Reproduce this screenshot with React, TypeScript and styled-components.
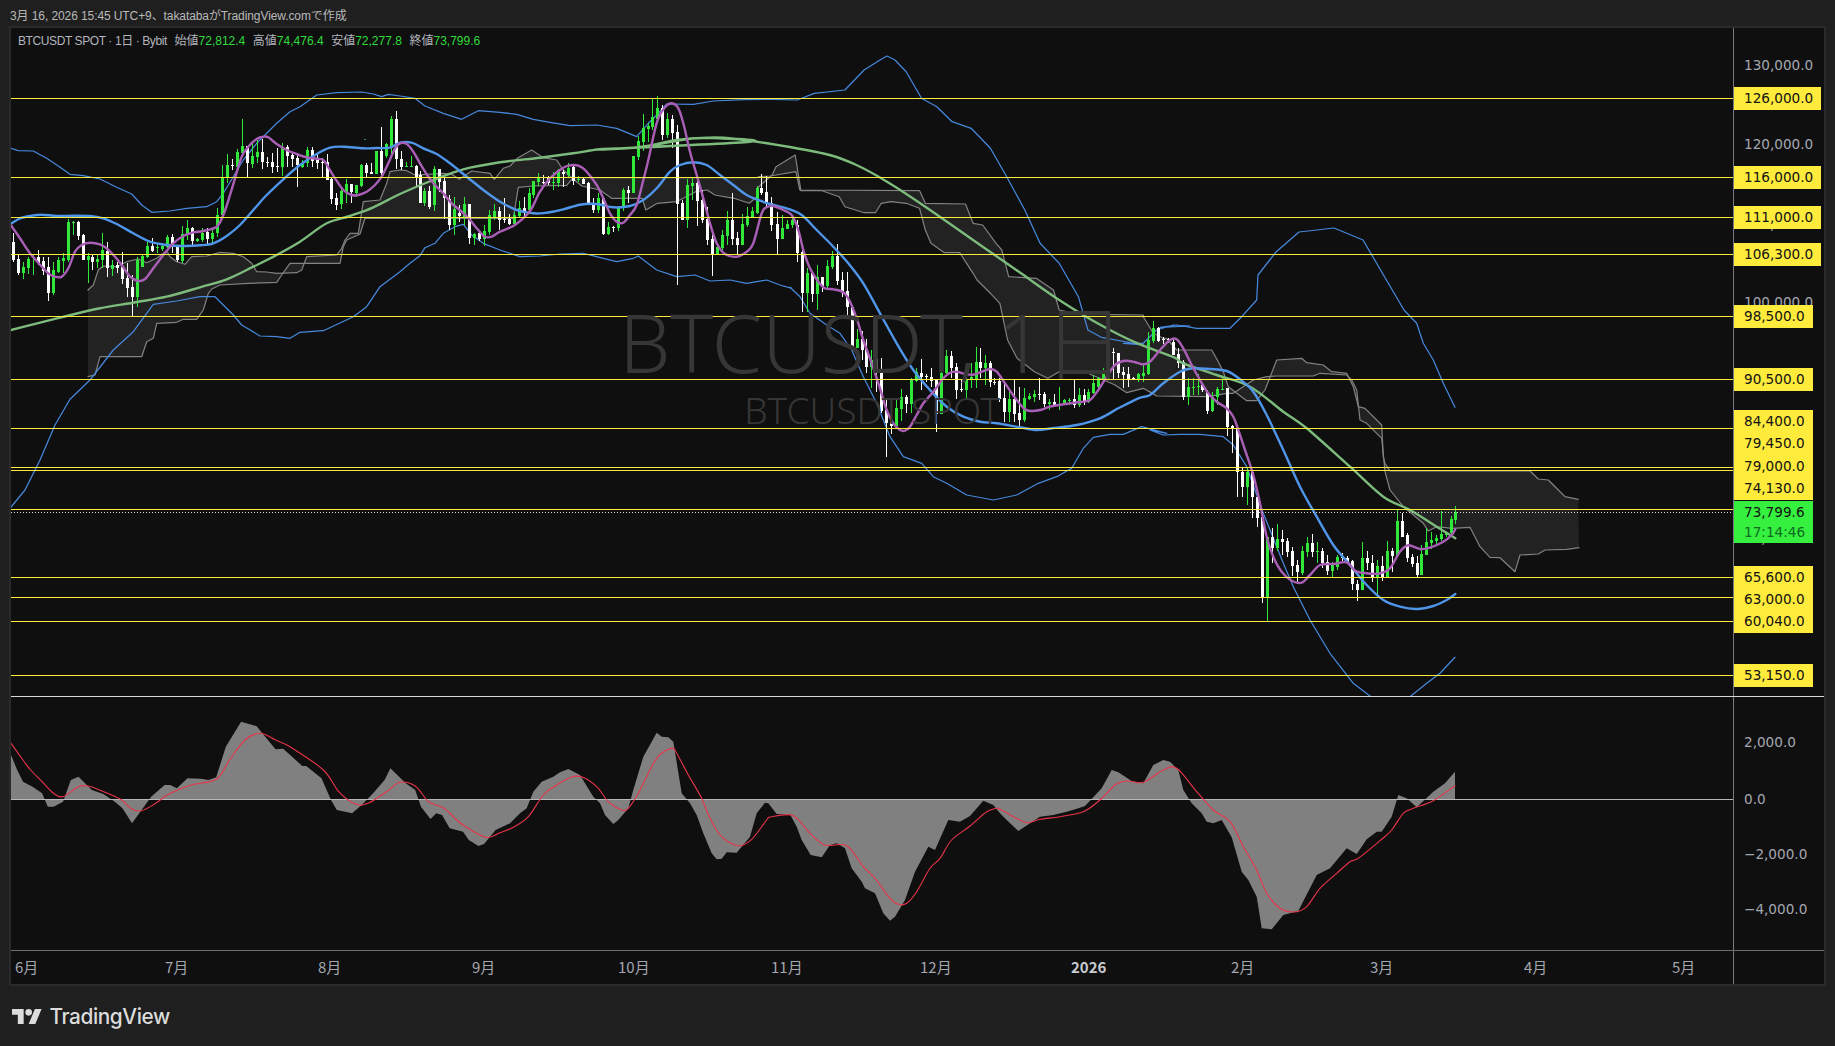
import * as React from 'react';
import styled, { createGlobalStyle } from 'styled-components';

type Pt = [number, number];

// traced from the picture: each block of numbers was read at its own crop
const at = (ox: number, oy: number, sx: number, sy: number) => (flat: number[]): Pt[] => {
  const out: Pt[] = [];
  for (let i = 0; i < flat.length; i += 2) {
    out.push([ox + flat[i] / sx, oy + flat[i + 1] / sy]);
  }
  return out;
};
const a0 = at(0, 0, 1, 1);
const a7 = at(0, 80, 3, 3);
const a9 = at(400, 80, 3, 3);
const a10 = at(790, 200, 3, 3);
const a6 = at(1150, 300, 3, 3);
const a5 = at(600, 60, 2.613, 3);
const a4 = at(0, 690, 2.613, 3);
const a11 = at(500, 700, 3, 3);
const a12 = at(1000, 700, 3, 3);

const polyline = (pts: Pt[]) => 'M' + pts.map(p => `${p[0].toFixed(1)} ${p[1].toFixed(1)}`).join('L');

const smooth = (pts: Pt[]) => {
  let d = `M${pts[0][0].toFixed(1)} ${pts[0][1].toFixed(1)}`;
  for (let i = 0; i < pts.length - 1; i++) {
    const p0 = pts[Math.max(i - 1, 0)];
    const p1 = pts[i];
    const p2 = pts[i + 1];
    const p3 = pts[Math.min(i + 2, pts.length - 1)];
    const c1x = p1[0] + (p2[0] - p0[0]) / 6;
    const c1y = p1[1] + (p2[1] - p0[1]) / 6;
    const c2x = p2[0] - (p3[0] - p1[0]) / 6;
    const c2y = p2[1] - (p3[1] - p1[1]) / 6;
    d += `C${c1x.toFixed(1)} ${c1y.toFixed(1)} ${c2x.toFixed(1)} ${c2y.toFixed(1)} ${p2[0].toFixed(1)} ${p2[1].toFixed(1)}`;
  }
  return d;
};

const purple: Pt[] = [
  ...a7([32,435,60,475,90,520,115,548,145,580,165,590,185,590,205,565,225,515,245,495,270,488,300,493,320,505,345,530,365,555,390,590,415,603,435,597,460,565,490,525,520,490,550,468,580,457,610,453,650,440,670,405,690,345,705,295,725,230,745,200,770,177,790,170,805,172,830,192,860,210,890,222,920,232,950,236,970,240,985,262,1005,295,1030,330,1055,345,1075,345,1100,335,1125,315,1145,290,1165,250,1185,205,1200,190]),
  ...a9([20,192,40,215,60,250,85,290,105,315,130,340,155,370,185,395,210,420,235,450,255,470,275,470,300,455,340,438,375,410,395,385,420,335,450,295,480,270,505,257,535,257,560,275,590,315,610,355,630,400,650,425,670,428,690,405,710,375,730,300,745,240,760,170,775,115,795,82,815,70,835,85,850,130,870,215,890,285,910,355,930,430,950,490,975,522,1010,530,1040,515,1060,490,1085,400,1100,382,1120,378,1150,390,1175,405]),
  ...a10([25,90,40,150,60,205,85,245,105,265,130,268,160,277,180,305,200,355,220,420,245,490,270,565,290,630,310,670,330,690,345,692,360,680,380,645,400,610,430,575,460,535,480,518,500,515,525,522,550,524,575,515,600,507,620,515,645,550,680,600,705,628,725,633,750,630,780,620,820,613,870,606,900,600,925,570,950,530,975,495,1000,483,1030,485,1060,493]),
  ...a6([0,185,30,150,60,120,80,118,100,145,125,195,150,240,175,280,200,305,230,325,250,350,265,390,285,450,310,525,330,610,350,710,370,770,395,815,425,842,455,848,480,825,510,795,550,792,590,787,615,812,650,820,690,820,720,805,750,755,775,736,810,747,840,743,880,725,905,705,916,688]),
];

const blue: Pt[] = [
  ...a7([32,432,60,415,95,407,125,404,170,408,220,407,270,408,310,415,350,432,400,460,450,485,500,495,550,498,600,496,640,490,680,468,720,435,760,390,800,345,850,298,900,255,950,222,990,203,1030,200,1090,205,1130,204,1170,203]),
  ...a9([0,188,35,188,70,205,110,222,150,250,200,290,250,330,300,365,350,390,400,400,440,398,490,388,540,374,590,372,640,382,690,378,730,360,770,325,810,275,840,255,880,247,920,255,960,285,1000,315,1040,345,1080,362,1120,375,1160,385]),
  ...a10([35,45,80,90,130,140,175,190,220,250,270,340,320,430,370,510,420,570,470,620,520,650,570,665,620,670,690,682,740,690,790,684,860,675,930,655,985,625,1045,595]),
  ...a6([0,285,40,250,90,215,130,205,180,207,230,213,270,238,310,275,350,345,400,450,450,560,500,650,550,735,600,795,650,855,700,900,750,920,800,927,850,918,890,900,916,882]),
];

const green: Pt[] = [
  ...a7([32,750,100,733,200,708,300,685,400,668,500,650,600,622,680,598,760,560,830,525,900,485,980,430,1050,408,1120,382]),
  ...a9([0,342,100,300,190,268,300,247,420,233,520,220,600,208,700,203,790,190,880,175,960,175,1050,185]),
  ...a5([0,268,100,262,200,240,280,233,350,236,500,262,600,285,670,315,750,365,850,440,1000,560,1100,640,1200,720,1300,790,1400,848,1500,892]),
  ...a6([100,190,200,225,300,260,400,335,470,385,600,500,700,590,780,630,860,680,916,715]),
];

const upperBand: Pt[] = [
  ...a7([32,205,55,212,100,213,140,235,180,262,210,283,250,287,300,297,350,322,395,342,425,375,455,397,510,393,560,385,620,380,650,365,670,340,700,290,730,240,770,190,830,130,870,95,900,80,950,45,1010,38,1085,36,1120,42,1145,50,1165,43,1200,48]),
  ...a9([45,55,75,78,130,100,185,118,235,92,300,97,350,103,400,118,450,127,510,137,590,135,650,145,710,170,745,130,770,105,800,72,880,73,940,63,1030,59,1120,58,1190,60]),
  ...a5([515,120,560,100,640,90,690,30]),
  ...a0([880,60,887,56,895,60]),
  ...a5([800,35,840,115,880,140,920,185,970,205,1020,265,1060,345,1110,450,1150,550,1200,610,1250,710,1275,810,1310,832,1420,855]),
  ...a10([1000,430,1060,430,1100,390,1150,375,1200,378]),
  ...a6([30,82,80,75,140,85,240,85,275,50,320,0]),
  ...a0([1258,275,1276,252,1299,232,1334,228,1363,240,1387,281,1404,310]),
  ...a6([800,70,820,130,850,180,880,250,915,322]),
];

const lowerBand: Pt[] = [
  ...a0([11,507,25,490,40,460,55,425]),
  ...a7([210,958,270,900,340,810,400,755,440,700,460,673,530,663,600,650,645,650,700,705,725,735,780,768,830,770,870,775,900,757,970,752,1060,710,1100,680,1140,620,1200,575]),
  ...a9([30,550,60,527,75,503,105,490,130,460,165,440,190,433,215,465,250,490,300,510,360,530,420,528,480,522,550,520,610,535,650,545,700,535,715,528,770,570,830,590,885,585,930,603,990,600,1040,610,1100,600,1140,615,1175,625]),
  ...a10([0,262,30,290,60,340,110,375,150,400,185,450,220,530,260,610,300,710,340,770,395,790,430,830,470,850,530,885,610,900,680,885,745,850,800,830,845,805,880,745,910,712,960,703,1000,703,1055,680,1130,700]),
  ...a6([0,390,40,405,90,403,150,403,220,410,250,435,290,500,340,640,400,790,430,860,480,960,540,1060,610,1150,660,1188,720,1230,780,1190,830,1150,870,1120,915,1072]),
];

const spanA: Pt[] = [
  ...a7([264,630,280,615,295,570,310,558,350,560,380,545,415,537,440,548,470,535,500,512,510,530,530,545,555,553,575,530,620,528,660,517,700,520,730,530,755,550,770,575,800,576,830,580,890,578,905,570,920,530,1010,525,1025,505,1035,480,1050,460,1075,460,1090,365,1140,360,1160,310,1170,275,1200,270]),
  ...a9([20,272,45,285,130,280,155,283,178,298,215,273,270,280,283,298,310,265,330,258,352,235,395,210,430,233,470,240,488,268,520,297,545,318]),
  ...a5([0,390,30,415,110,415,120,450,150,430,200,425,250,395,280,390,300,405,350,415,390,430,410,410,415,380,450,345,460,320,510,285,525,392,580,392,625,410,640,440,690,458,720,458,735,430,760,425,800,430,835,445,850,510,865,550,900,578,940,578,975,640,985,660,1020,700,1045,730,1065,840,1090,895,1135,935,1170,955,1200,935,1265,932]),
  ...a10([905,525,930,535,975,555,1010,578,1060,565,1095,585]),
  ...a6([0,275,20,288,175,290,230,280,250,280,310,240,350,230,380,228,490,228,510,220,590,225,605,240,620,270,630,360,650,370,695,415,705,515,720,570,760,620,820,670,835,693,860,680,905,685,960,682,990,740,1020,772,1050,773,1095,815,1110,765,1165,762,1185,750,1250,748,1287,743]),
];

const spanB: Pt[] = [
  ...a7([264,890,285,885,300,830,425,830,440,785,460,775,470,730,530,727,550,718,590,718,610,690,625,640,635,627,660,615,745,610,830,607,845,585,870,550,1020,550,1030,500,1040,480,1080,462,1095,415,1200,415]),
  ...a9([340,415,355,322,400,318,500,316,520,293,1070,293]),
  ...a5([415,350,445,348,512,335,522,390,835,392,850,430,955,432,975,490,1000,495,1035,550,1050,570,1068,650,1140,655,1185,690,1200,750,1250,762,1420,765]),
  ...a10([1060,350,1090,400,1120,415]),
  ...a6([50,115,80,150,185,150,205,185,220,215,235,260,290,302,320,302,345,270,380,180,455,175,470,188,520,195,545,215,590,220,610,260,625,320,645,325,695,375,700,470,705,490,720,513,1140,513,1165,537,1195,540,1225,570,1245,590,1285,598]),
];

const cloud = polyline(spanA) + 'L' + polyline([...spanB].reverse()).slice(1) + 'Z';

const macd: Pt[] = [
  ...a4([27,190,45,240,60,275,85,290,110,310,125,350,140,350,165,335,185,270,205,260,240,300,270,312,300,335,320,355,345,400,370,360,395,320,430,285,445,285,462,295,490,265,525,266,545,270,565,262,590,170,630,95,670,108,720,178,740,176,790,228,800,228,840,265,865,330,880,360,920,370,945,345,975,310,1005,270,1020,235,1060,280,1085,300,1100,350,1125,387,1140,370,1155,375,1175,415,1210,425,1225,450,1250,468,1265,462,1295,420]),
  ...a11([30,370,60,340,80,325,100,275,125,245,160,230,180,217,205,207,240,225,255,250,280,290,300,310,315,345,340,372,355,360,385,325,400,270,430,170,470,98,485,110,505,112,520,125,545,280,570,310,590,345,610,400,635,460,650,478,665,476,680,457,710,458,750,410,770,340,795,308,805,310,830,342,870,343,890,380,905,420,932,465,965,472,990,435,1010,430,1035,445,1055,505,1085,545,1095,565,1125,580,1150,640,1170,662,1185,650,1215,600,1245,515,1285,440,1305,450,1345,360,1380,365,1410,348,1450,302,1480,315]),
  ...a12([0,340,20,360,55,393,120,350,160,345,200,335,235,325,255,318,305,265,335,210,355,217,395,243,430,250,460,195,490,180,510,185,535,210,550,270,575,310,605,340,620,365,640,370,665,360,695,412,725,515,745,540,770,590,785,685,815,688,850,645,895,633,950,525,990,505,1040,445,1070,462,1100,418,1130,395,1145,395,1175,350,1195,285,1220,295,1250,322,1300,275,1335,250,1365,215]),
];

const signal: Pt[] = [
  ...a4([27,157,60,210,80,240,110,275,140,310,165,320,205,290,230,288,265,302,315,328,345,358,370,362,400,345,445,310,500,285,565,268,600,210,640,150,680,130,720,150,760,172,845,240,885,305,930,343,965,338,1010,305,1045,277,1085,288,1120,335,1160,355,1210,405,1270,442]),
  ...a11([0,398,40,382,85,350,130,285,170,255,210,233,245,230,290,260,325,305,365,330,385,325,415,280,470,175,515,145,530,160,565,225,605,295,630,355,665,410,715,437,755,418,800,360,815,350,880,347,930,400,975,435,1040,437,1090,500,1125,535,1170,595,1195,613,1220,610,1250,575,1290,505,1320,475,1355,420,1410,378,1460,335,1490,325]),
  ...a12([0,328,40,350,80,368,120,358,180,350,250,335,300,300,345,255,380,243,430,247,490,210,530,205,590,275,640,330,690,365,730,440,770,510,800,580,840,625,885,636,920,620,960,565,1010,520,1050,485,1075,475,1140,422,1175,390,1210,340,1240,325,1300,302,1365,257]),
];

const G = 1;
const W = 0;
type Row = [number, number, number, number, number, number];

const rows7: Row[] = [
  [40,W,458,486,540,545],[55,W,525,537,578,584],[70,G,545,560,580,597],[85,G,530,537,565,583],[100,G,525,530,532,585],[115,W,510,530,548,555],[130,W,530,543,572,585],[145,W,530,560,638,662],[160,G,545,570,640,645],[175,G,530,540,575,580],[190,G,518,533,543,580],[205,G,418,425,540,545],[220,G,422,426,428,465],[235,W,422,425,468,480],[250,W,462,465,540,540],[265,G,520,528,540,608],[277,W,525,530,545,570],[292,G,522,538,547,565],[307,G,460,510,540,565],[322,W,487,513,565,590],[337,G,540,555,567,587],[352,W,545,555,565,580],[367,W,517,560,597,612],[382,W,550,595,623,650],[397,W,585,622,650,712],[412,G,530,540,652,680],[427,G,525,528,560,562],[442,G,480,498,530,533],[457,W,475,498,512,515],[472,G,490,500,505,518],[487,G,490,497,507,512],[502,G,465,470,500,505],[517,W,462,470,500,520],[532,W,500,500,540,545],[547,G,438,462,542,548],[562,G,420,444,465,480],[577,W,440,444,482,497],[592,G,475,477,483,486],[607,G,445,458,480,485],[622,W,445,456,477,495],[637,G,445,458,478,492],[650,G,385,405,460,472],[665,G,255,292,405,410],[680,G,222,255,295,308],[695,W,238,255,257,270],[710,G,208,217,260,265],[725,G,118,198,220,225],[740,W,198,198,250,295],[755,G,190,228,252,265],[770,G,175,216,230,250],[785,W,178,216,247,268],[800,W,230,245,247,262],[815,W,220,246,262,278],[830,W,205,258,260,275],[845,G,190,203,260,288],[860,W,195,200,228,260],[875,W,215,225,237,260],[890,W,225,233,255,320],[905,G,240,250,260,263],[920,G,200,210,250,262],[935,W,200,210,242,262],[950,W,218,240,248,268],[965,W,235,245,247,295],[980,W,222,245,300,300],[992,W,290,297,357,372],[1007,W,338,355,375,390],[1022,G,320,333,373,387],[1037,G,298,312,335,368],[1052,W,312,313,337,368],[1067,G,318,316,340,352],[1082,G,252,255,318,322],[1097,W,250,255,278,290],[1112,W,250,277,282,282],[1127,G,213,214,282,282],[1142,W,140,212,280,290],[1157,G,190,192,228,235],[1172,G,108,118,205,235],[1187,W,92,118,238,268],
];
const rows9: Row[] = [
  [2,W,213,238,262,270],[17,G,245,258,260,262],[32,G,228,258,260,262],[47,W,255,258,290,320],[60,W,272,285,368,370],[73,G,325,332,368,378],[88,W,318,332,380,388],[103,G,258,267,376,392],[118,W,267,267,305,335],[133,W,295,302,353,418],[148,W,345,358,435,450],[163,G,350,388,435,465],[178,W,375,398,408,425],[193,G,352,372,410,435],[208,W,372,372,473,492],[223,G,460,461,473,495],[238,W,455,460,478,482],[253,G,435,453,478,498],[268,G,390,405,456,465],[283,G,372,393,410,420],[298,W,380,393,420,450],[313,W,353,417,420,428],[328,W,403,417,432,435],[343,G,395,405,432,432],[358,G,362,385,408,412],[373,W,352,385,398,408],[388,G,325,340,390,395],[400,G,303,303,345,355],[415,G,278,292,306,318],[430,W,285,305,307,313],[445,W,287,292,308,315],[460,G,275,305,307,330],[475,G,268,270,310,320],[490,W,270,275,282,320],[505,G,248,265,285,292],[520,W,258,262,303,315],[535,G,288,297,299,307],[550,W,295,297,312,312],[565,W,305,308,372,372],[580,W,355,370,390,398],[595,G,340,355,390,400],[610,W,355,355,462,465],[625,G,425,442,462,465],[640,W,437,442,445,455],[655,G,378,380,443,452],[670,G,325,330,385,393],[685,W,318,330,338,368],[700,G,228,229,338,338],[715,G,168,183,232,240],[730,G,102,145,186,213],[743,G,130,138,147,185],[757,G,57,112,142,150],[772,G,48,85,118,125],[787,W,75,85,165,180],[802,G,98,118,165,175],[817,W,105,118,158,205],[832,W,135,155,372,614],[847,W,360,370,420,420],[862,G,298,316,420,445],[877,G,295,308,318,360],[892,W,303,308,362,438],[907,W,330,360,420,428],[922,W,380,418,480,495],[937,W,455,477,523,587],[952,G,495,502,522,522],[967,G,450,465,505,510],[982,G,393,420,468,495],[997,W,340,420,478,495],[1012,W,455,475,495,522],[1027,G,403,432,495,495],[1042,G,382,408,435,440],[1057,G,382,393,415,415],[1070,G,318,325,398,402],[1083,W,283,325,340,345],[1098,W,288,337,368,382],[1113,W,350,368,434,452],[1130,W,397,432,477,522],[1145,G,405,445,477,477],[1160,G,420,432,446,448],[1175,G,410,420,435,445],[1190,W,420,434,518,545],
];
const rows10: Row[] = [
  [35,W,138,157,278,335],[50,G,205,218,278,335],[65,W,212,220,282,305],[80,G,195,232,282,330],[95,W,232,232,258,275],[110,G,180,198,258,263],[125,G,153,168,200,208],[140,W,132,168,242,255],[155,W,215,240,275,290],[170,W,217,273,320,358],[185,W,320,320,443,452],[200,G,388,417,443,445],[215,W,392,417,450,480],[227,W,418,447,500,518],[242,G,450,480,500,565],[257,W,475,478,515,575],[272,W,475,513,633,640],[287,W,600,630,668,770],[302,W,655,665,678,703],[317,G,595,625,678,680],[332,G,567,590,627,662],[347,W,585,590,613,640],[362,G,535,537,613,640],[377,G,505,517,542,545],[392,W,478,520,530,570],[407,W,522,527,530,545],[422,W,505,530,542,560],[437,W,540,540,642,695],[452,G,490,520,642,642],[467,G,450,467,520,525],[482,W,453,467,505,535],[497,W,490,500,570,597],[512,W,540,567,570,575],[527,G,530,537,570,600],[542,G,490,532,540,565],[557,G,442,487,537,565],[570,W,445,487,505,535],[585,G,465,490,505,555],[600,W,483,490,545,560],[613,W,535,545,548,555],[628,W,535,542,597,605],[643,W,545,595,635,665],[658,G,570,597,635,665],[673,W,540,597,642,665],[688,W,560,640,660,680],[703,G,565,595,660,665],[718,G,580,588,597,600],[733,G,570,582,592,605],[748,W,535,583,585,600],[763,W,575,583,612,620],[778,G,597,605,612,630],[793,W,583,605,615,620],[808,G,560,612,615,630],[823,G,597,600,612,615],[838,G,595,600,602,615],[853,W,540,597,615,623],[868,G,565,585,615,622],[883,W,568,585,605,615],[895,G,568,577,607,610],[910,G,525,550,580,582],[925,G,530,533,560,565],[940,G,505,512,537,537],[955,G,435,457,515,537],[970,W,445,457,459,540],[985,W,458,460,520,535],[1000,W,500,515,525,565],[1015,W,502,522,537,560],[1030,W,530,533,537,540],[1045,G,518,522,540,545],[1060,G,490,518,528,545],[1075,G,395,420,522,525],[1090,G,362,385,422,430],[1105,W,380,385,422,425],[1120,W,410,417,420,432],[1135,W,415,417,420,430],[1150,W,418,425,465,465],[1165,W,445,462,490,505],[1180,W,480,485,590,600],
];
const rows6: Row[] = [
  [115,G,235,262,290,315],[130,G,235,260,262,285],[143,G,222,258,260,285],[157,W,250,255,270,275],[172,W,270,275,333,342],[187,G,275,290,333,335],[202,G,260,267,292,315],[217,G,235,266,268,268],[232,W,265,265,380,408],[247,W,375,377,388,460],[262,W,385,388,517,590],[277,W,505,515,560,590],[292,G,505,517,560,615],[307,W,515,517,590,655],[322,W,590,590,653,680],[337,W,650,650,895,908],[352,G,710,712,895,965],[367,W,685,712,745,790],[382,G,672,718,745,752],[397,W,690,717,725,765],[412,W,715,723,757,772],[427,W,742,753,798,828],[442,W,780,795,815,845],[457,G,738,753,818,825],[472,G,712,730,757,770],[485,W,702,730,757,770],[500,G,725,754,757,790],[515,W,745,753,790,805],[530,W,765,787,812,825],[545,G,785,795,812,832],[560,G,765,772,800,810],[575,W,758,770,773,783],[590,W,768,775,785,790],[605,W,780,782,853,870],[620,W,840,852,870,903],[635,G,727,775,870,870],[650,W,753,775,790,810],[665,W,765,788,830,845],[680,G,780,798,830,890],[695,W,768,798,832,842],[710,G,724,753,830,835],[725,W,745,752,768,815],[740,G,630,663,768,770],[755,W,638,663,710,712],[770,W,700,705,775,785],[785,W,762,772,792,802],[800,W,768,790,825,832],[812,G,736,762,825,825],[827,G,685,727,765,765],[842,G,695,720,730,748],[857,G,706,713,723,735],[872,G,633,702,718,722],[887,G,695,697,705,712],[902,G,648,657,700,705],[916,G,618,636,660,672],
];

const place = (rows: Row[], ox: number, oy: number) =>
  rows.map(r => ({
    x: Math.round(ox + r[0] / 3),
    up: r[1] === G,
    high: oy + r[2] / 3,
    top: oy + r[3] / 3,
    bottom: oy + r[4] / 3,
    low: oy + r[5] / 3,
  }));

const candles = [
  ...place(rows7, 0, 80),
  ...place(rows9, 400, 80),
  ...place(rows10, 790, 200),
  ...place(rows6, 1150, 300),
];

const levels = [98.5, 177, 217, 254, 316, 379, 428, 467, 470, 509, 577, 597, 621, 675];

const PANE_TOP = 28;
const MACD_TOP = 697;

const scaleTicks = [
  { text: '130,000.0', y: 64.5 },
  { text: '120,000.0', y: 143.7 },
  { text: '110,000.0', y: 224 },
  { text: '100,000.0', y: 302 },
  { text: '70,000.0', y: 538 },
];

const priceTags = [
  { text: '126,000.0', y: 98.5, wide: true },
  { text: '116,000.0', y: 177.5, wide: true },
  { text: '111,000.0', y: 217.5, wide: true },
  { text: '106,300.0', y: 254.5, wide: true },
  { text: '98,500.0', y: 316, wide: false },
  { text: '90,500.0', y: 379.5, wide: false },
  { text: '84,400.0', y: 421, wide: false },
  { text: '79,450.0', y: 443.5, wide: false },
  { text: '79,000.0', y: 466, wide: false },
  { text: '74,130.0', y: 488.5, wide: false },
  { text: '65,600.0', y: 577, wide: false },
  { text: '63,000.0', y: 599, wide: false },
  { text: '60,040.0', y: 621.5, wide: false },
  { text: '53,150.0', y: 675.5, wide: false },
];

const macdTicks = [
  { text: '2,000.0', y: 741.7 },
  { text: '0.0', y: 798.5 },
  { text: '−2,000.0', y: 853.5 },
  { text: '−4,000.0', y: 908.5 },
];

const months = [
  { text: '6月', x: 15 },
  { text: '7月', x: 165 },
  { text: '8月', x: 318 },
  { text: '9月', x: 472 },
  { text: '10月', x: 618 },
  { text: '11月', x: 771 },
  { text: '12月', x: 920 },
  { text: '2026', x: 1071, strong: true },
  { text: '2月', x: 1231 },
  { text: '3月', x: 1370 },
  { text: '4月', x: 1524 },
  { text: '5月', x: 1672 },
];

const GlobalStyle = createGlobalStyle`
  html, body {
    margin: 0;
    padding: 0;
    background: #1f1f1f;
  }
  body {
    font-family: "Liberation Sans", "Noto Sans CJK JP", sans-serif;
  }
`;

const Page = styled.div`
  width: 1835px;
  height: 1046px;
  padding-left: 9px;
  box-sizing: border-box;
  display: flex;
  flex-direction: column;
  overflow: hidden;
`;

const Header = styled.div`
  height: 26px;
  padding: 2px 0 0 1px;
  box-sizing: border-box;
  display: flex;
  align-items: center;
  font-size: 12px;
  letter-spacing: -0.09px;
  color: #b9b9b9;
`;

const Frame = styled.div`
  width: 1817px;
  height: 960px;
  box-sizing: border-box;
  border: 2px solid #2a2a2a;
  background: #0f0f0f;
  display: grid;
  grid-template-columns: 1722px 1px 90px;
  grid-template-rows: 668px 1px 253px 1px 33px;
`;

const Pane = styled.div`
  position: relative;
  overflow: hidden;
`;

const Drawing = styled.svg`
  display: block;
`;

const VRule = styled.div`
  grid-column: 2;
  background: #7a7a7a;
`;

const PaneRule = styled.div`
  grid-column: 1 / 4;
  grid-row: 2;
  background: #d6d6dc;
`;

const AxisRule = styled.div`
  grid-column: 1 / 4;
  grid-row: 4;
  background: #6f6f6f;
`;

const Legend = styled.div`
  position: absolute;
  left: 7px;
  top: 5px;
  display: flex;
  gap: 7.6px;
  font-size: 12px;
  line-height: 16px;
  color: #b2b5be;
  white-space: nowrap;
`;

const LegendTitle = styled.span`
  letter-spacing: -0.4px;
`;

const LegendItem = styled.span`
  display: inline-flex;
`;

const LegendValue = styled.span`
  color: #2fdc3c;
`;

const Watermark = styled.div`
  position: absolute;
  inset: 0;
  display: flex;
  flex-direction: column;
  align-items: center;
  justify-content: center;
  color: #363636;
  font-family: "Noto Sans", "Noto Sans CJK JP", sans-serif;
  white-space: nowrap;
`;

const WatermarkTitle = styled.div`
  font-size: 81px;
  line-height: 96px;
  font-weight: 300;
`;

const WatermarkSub = styled.div`
  font-size: 37px;
  line-height: 40px;
  font-weight: 300;
`;

const Axis = styled.div`
  position: relative;
  overflow: hidden;
  font-family: "DejaVu Sans", sans-serif;
  font-size: 13.6px;
`;

const Tick = styled.div<{ $top: number }>`
  position: absolute;
  left: 10px;
  top: ${p => p.$top - 10}px;
  height: 20px;
  line-height: 20px;
  color: #a3a6af;
  white-space: nowrap;
`;

const PriceTag = styled.div<{ $top: number; $wide: boolean }>`
  position: absolute;
  left: 0;
  top: ${p => p.$top - 11.5}px;
  width: ${p => (p.$wide ? 87 : 79)}px;
  height: 23px;
  line-height: 23px;
  padding-left: 10px;
  box-sizing: border-box;
  background: #ffeb3b;
  color: #131313;
  white-space: nowrap;
`;

const LastPrice = styled.div`
  position: absolute;
  left: 0;
  top: 473px;
  width: 79px;
  height: 42px;
  padding: 1px 0 0 10px;
  box-sizing: border-box;
  background: #35f03e;
  color: #131313;
  line-height: 20px;
`;

const Countdown = styled.div`
  color: #0f6a22;
`;

const TimeAxis = styled.div`
  grid-column: 1 / 2;
  grid-row: 5;
  position: relative;
  font-family: "Noto Sans CJK JP", sans-serif;
  font-size: 15px;
`;

const TimeLabel = styled.span<{ $left: number; $strong?: boolean }>`
  position: absolute;
  left: ${p => p.$left}px;
  top: 6px;
  line-height: 20px;
  font-weight: ${p => (p.$strong ? 700 : 400)};
  color: ${p => (p.$strong ? '#c8cad0' : '#a3a6af')};
`;

const Footer = styled.div`
  flex: 1;
  display: flex;
  align-items: center;
  gap: 8px;
  padding-left: 2.5px;
  box-sizing: border-box;
`;

const Brand = styled.span`
  font-family: Inter, sans-serif;
  font-size: 20.8px;
  font-weight: 500;
  letter-spacing: -0.4px;
  color: #dcdcdc;
`;

const CloudFill = styled.path`
  fill: #222222;
  stroke: none;
`;

const Line = styled.path<{ $color: string; $width: number }>`
  fill: none;
  stroke: ${p => p.$color};
  stroke-width: ${p => p.$width}px;
  stroke-linejoin: round;
  stroke-linecap: round;
`;

const Area = styled.path`
  fill: #808080;
  stroke: none;
`;

const Wick = styled.rect<{ $up: boolean }>`
  fill: ${p => (p.$up ? '#2fe83a' : '#ffffff')};
  shape-rendering: crispEdges;
`;

const StrayMark = styled.rect`
  fill: #1f7f7a;
`;

const Level = styled.line`
  stroke: #ffeb3b;
  stroke-width: 1px;
  shape-rendering: crispEdges;
`;

const PriceLine = styled.line`
  stroke: #d8d8d8;
  stroke-width: 1px;
  stroke-dasharray: 1 2;
  shape-rendering: crispEdges;
`;

const ZeroLine = styled.line`
  stroke: #b8b8bc;
  stroke-width: 1px;
  shape-rendering: crispEdges;
`;

const MainChart = () => (
  <Drawing width={1722} height={668} viewBox={`11 ${PANE_TOP} 1722 668`}>
    <CloudFill d={cloud} />
    <Line d={polyline(spanA)} $color="#828282" $width={1.2} />
    <Line d={polyline(spanB)} $color="#828282" $width={1.2} />
    <Line d={polyline(upperBand)} $color="#4688dc" $width={1.25} />
    <Line d={polyline(lowerBand)} $color="#4688dc" $width={1.25} />
    <StrayMark x={364} y={139} width={2} height={1} />
    {candles.map((c, i) => (
      <g key={i}>
        <Wick $up={c.up} x={c.x} y={c.high} width={1} height={Math.max(c.low - c.high, 1)} />
        <Wick $up={c.up} x={c.x - 1} y={c.top} width={3} height={Math.max(c.bottom - c.top, 1)} />
      </g>
    ))}
    <Line d={smooth(green)} $color="#7dbb7d" $width={2.4} />
    <Line d={smooth(blue)} $color="#4f95ea" $width={2.4} />
    <Line d={smooth(purple)} $color="#aa5fb6" $width={2.4} />
    {levels.map(y => (
      <Level key={y} x1={11} x2={1733} y1={Math.floor(y) + 0.5} y2={Math.floor(y) + 0.5} />
    ))}
    <PriceLine x1={11} x2={1733} y1={512.5} y2={512.5} />
  </Drawing>
);

const last = macd[macd.length - 1];
const macdArea = polyline(macd) + `L${last[0].toFixed(1)} 799L${macd[0][0].toFixed(1)} 799Z`;

const MacdChart = () => (
  <Drawing width={1722} height={253} viewBox={`11 ${MACD_TOP} 1722 253`}>
    <Area d={macdArea} />
    <ZeroLine x1={11} x2={1733} y1={799.5} y2={799.5} />
    <Line d={smooth(signal)} $color="#e8354a" $width={1.1} />
  </Drawing>
);

const TvLogo = () => (
  <svg width="30" height="15" viewBox="0 4 36 18" fill="#dcdcdc">
    <path d="M14 22H7V11H0V4h14v18zM28 22h-8l7.5-18h8L28 22z" />
    <circle cx="20" cy="8" r="4" />
  </svg>
);

export default function App(): JSX.Element {
  return (
    <Page>
      <GlobalStyle />
      <Header>3月 16, 2026 15:45 UTC+9、takatabaがTradingView.comで作成</Header>
      <Frame>
        <Pane>
          <Watermark>
            <WatermarkTitle>BTCUSDT, 1日</WatermarkTitle>
            <WatermarkSub>BTCUSDT SPOT</WatermarkSub>
          </Watermark>
          <MainChart />
          <Legend>
            <LegendTitle>BTCUSDT SPOT · 1日 · Bybit</LegendTitle>
            <LegendItem>始値<LegendValue>72,812.4</LegendValue></LegendItem>
            <LegendItem>高値<LegendValue>74,476.4</LegendValue></LegendItem>
            <LegendItem>安値<LegendValue>72,277.8</LegendValue></LegendItem>
            <LegendItem>終値<LegendValue>73,799.6</LegendValue></LegendItem>
          </Legend>
        </Pane>
        <VRule />
        <Axis>
          {scaleTicks.map(t => (
            <Tick key={t.text} $top={t.y - PANE_TOP}>{t.text}</Tick>
          ))}
          {priceTags.map(t => (
            <PriceTag key={t.text} $top={t.y - PANE_TOP} $wide={t.wide}>{t.text}</PriceTag>
          ))}
          <LastPrice>
            73,799.6
            <Countdown>17:14:46</Countdown>
          </LastPrice>
        </Axis>
        <PaneRule />
        <Pane>
          <MacdChart />
        </Pane>
        <VRule />
        <Axis>
          {macdTicks.map(t => (
            <Tick key={t.text} $top={t.y - MACD_TOP}>{t.text}</Tick>
          ))}
        </Axis>
        <AxisRule />
        <TimeAxis>
          {months.map(m => (
            <TimeLabel key={m.text} $left={m.x - 11} $strong={m.strong}>{m.text}</TimeLabel>
          ))}
        </TimeAxis>
        <VRule />
      </Frame>
      <Footer>
        <TvLogo />
        <Brand>TradingView</Brand>
      </Footer>
    </Page>
  );
}
